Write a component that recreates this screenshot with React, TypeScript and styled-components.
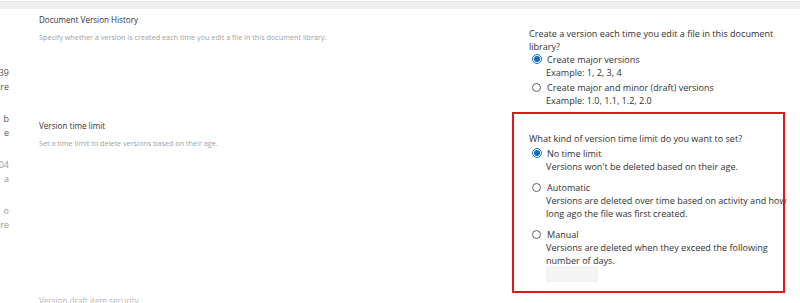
import React from "react";
import styled, { createGlobalStyle } from "styled-components";

const GlobalStyle = createGlobalStyle`
  html, body { margin: 0; padding: 0; background: #ffffff; }
  body { font-family: "Open Sans", "Noto Sans", Arial, sans-serif; color: #323130; }
  * { box-sizing: border-box; }
`;

const Page = styled.div`
  width: 800px;
  height: 303px;
  overflow: hidden;
  background: #ffffff;
  padding-top: 1px;
`;

const TopBar = styled.div`
  height: 8px;
  border-top: 1px solid #e3e3e3;
  background: #efefef;
`;

const Body = styled.div`
  display: flex;
  align-items: flex-start;
`;

const Gutter = styled.div`
  width: 9px;
  flex-shrink: 0;
  overflow: hidden;
  padding-top: 57px;
  display: flex;
  flex-direction: column;
  gap: 19px;
`;

const GutterGroup = styled.div<{ $tone: "dark" | "light" }>`
  display: flex;
  flex-direction: column;
  color: ${(p) => (p.$tone === "dark" ? "#555555" : "#9a9a9a")};
  font-size: 9px;
  line-height: 13.5px;
`;

const GutterLine = styled.div`
  display: flex;
  justify-content: flex-end;
  white-space: pre;
  & > span { flex-shrink: 0; }
`;

const Main = styled.div`
  flex: 1;
  padding: 5px 0 0 30px;
  display: flex;
  flex-direction: column;
  gap: 13px;
`;

const Section = styled.section`
  position: relative;
  display: grid;
  grid-template-columns: 490px 266px;
  align-items: start;
`;

const Info = styled.div`
  display: flex;
  flex-direction: column;
  gap: 6px;
`;

const Title = styled.h2<{ $faint?: boolean }>`
  margin: 0;
  font-weight: 400;
  font-size: 8.1px;
  line-height: 12px;
  color: ${(p) => (p.$faint ? "#b5b5b5" : "#333333")};
`;

const Desc = styled.p`
  margin: 0;
  font-size: 7.25px;
  line-height: 10px;
  color: #a0a0a0;
`;

const Options = styled.div`
  padding-top: 12.5px;
  font-size: 9.05px;
  line-height: 13px;
  color: #323130;
`;

const Question = styled.div`
  margin: 0;
`;

const OptionList = styled.div<{ $spacing: number; $lead: number }>`
  display: flex;
  flex-direction: column;
  gap: ${(p) => p.$spacing}px;
  margin-top: ${(p) => p.$lead}px;
`;

const Option = styled.label`
  display: grid;
  grid-template-columns: 18px 1fr;
  align-items: center;
`;

const Radio = styled.span<{ $checked?: boolean }>`
  grid-column: 1;
  grid-row: 1;
  margin-left: 3px;
  width: ${(p) => (p.$checked ? 10 : 9)}px;
  height: ${(p) => (p.$checked ? 10 : 9)}px;
  border-radius: 50%;
  border: 1px solid ${(p) => (p.$checked ? "#0f6cbd" : "#616161")};
  display: flex;
  align-items: center;
  justify-content: center;
  background: #ffffff;
  &::after {
    content: "";
    display: ${(p) => (p.$checked ? "block" : "none")};
    width: 6px;
    height: 6px;
    border-radius: 50%;
    background: #0f6cbd;
  }
`;

const OptionLabel = styled.span`
  grid-column: 2;
  grid-row: 1;
`;

const OptionDesc = styled.span`
  grid-column: 2;
  grid-row: 2;
  margin-left: -1px;
`;

const DaysInput = styled.span`
  grid-column: 2;
  grid-row: 3;
  display: block;
  margin: -1px 0 0 -1px;
  width: 52px;
  height: 16px;
  background: #f4f4f4;
  border: 1px solid #f0f0f0;
`;

const Highlight = styled.div`
  position: absolute;
  left: 473px;
  top: -7.5px;
  width: 273px;
  height: 181px;
  border: 2px solid #e3161b;
  pointer-events: none;
`;

type Choice = { label: string; desc: string; checked?: boolean; input?: boolean };

const OptionGroup: React.FC<{ items: Choice[]; spacing: number; lead: number }> = ({ items, spacing, lead }) => (
  <OptionList $spacing={spacing} $lead={lead}>
    {items.map((it) => (
      <Option key={it.label}>
        <Radio $checked={it.checked} />
        <OptionLabel>{it.label}</OptionLabel>
        <OptionDesc>{it.desc}</OptionDesc>
        {it.input && <DaysInput />}
      </Option>
    ))}
  </OptionList>
);

const gutterGroups: { tone: "dark" | "light"; lines: string[] }[] = [
  { tone: "dark", lines: ["Version 39", "are"] },
  { tone: "dark", lines: ["up to  b", "the  e"] },
  { tone: "light", lines: ["2004", "in  a"] },
  { tone: "light", lines: ["log  o", "are"] },
];

export default function App() {
  return (
    <>
      <GlobalStyle />
      <Page>
        <TopBar />
        <Body>
          <Gutter>
            {gutterGroups.map((g, i) => (
              <GutterGroup key={i} $tone={g.tone}>
                {g.lines.map((l) => (
                  <GutterLine key={l}>
                    <span>{l}</span>
                  </GutterLine>
                ))}
              </GutterGroup>
            ))}
          </Gutter>
          <Main>
            <Section>
              <Info>
                <Title>Document Version History</Title>
                <Desc>Specify whether a version is created each time you edit a file in this document library.</Desc>
              </Info>
              <Options>
                <Question>Create a version each time you edit a file in this document library?</Question>
                <OptionGroup
                  spacing={2}
                  lead={0}
                  items={[
                    { label: "Create major versions", desc: "Example: 1, 2, 3, 4", checked: true },
                    { label: "Create major and minor (draft) versions", desc: "Example: 1.0, 1.1, 1.2, 2.0" },
                  ]}
                />
              </Options>
            </Section>
            <Section>
              <Info>
                <Title>Version time limit</Title>
                <Desc>Set a time limit to delete versions based on their age.</Desc>
              </Info>
              <Options>
                <Question>What kind of version time limit do you want to set?</Question>
                <OptionGroup
                  spacing={8}
                  lead={1.5}
                  items={[
                    { label: "No time limit", desc: "Versions won't be deleted based on their age.", checked: true },
                    { label: "Automatic", desc: "Versions are deleted over time based on activity and how long ago the file was first created." },
                    { label: "Manual", desc: "Versions are deleted when they exceed the following number of days.", input: true },
                  ]}
                />
              </Options>
              <Highlight />
            </Section>
            <Section>
              <Info>
                <Title $faint>Version draft item security</Title>
              </Info>
            </Section>
          </Main>
        </Body>
      </Page>
    </>
  );
}
